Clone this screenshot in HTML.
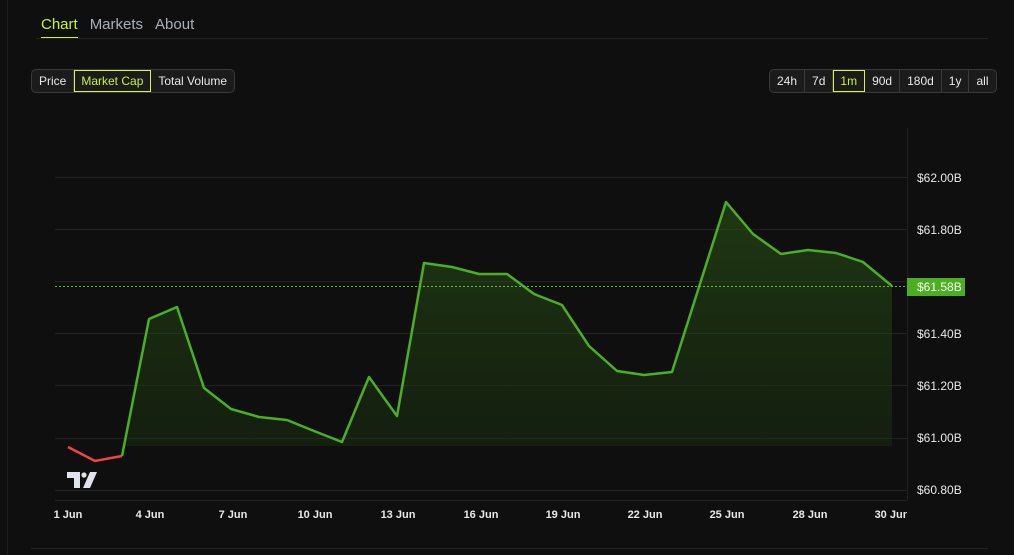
<!DOCTYPE html>
<html><head><style>
body{margin:0;background:#0f0f0f;font-family:"Liberation Sans",sans-serif;width:1014px;height:555px;overflow:hidden;position:relative}
.vl{position:absolute;left:7px;top:0;width:1px;height:555px;background:#1e1e1e}
.tabs{position:absolute;left:41px;top:16px;font-size:15px;color:#aab0b8}
.tabs span{margin-right:12px;display:inline-block}
.tabs .a{color:#c6f432;border-bottom:2px solid #c6f432;padding-bottom:4px}
.tl{position:absolute;left:36px;top:38px;width:952px;height:1px;background:#222}
.grp{position:absolute;top:69px;display:flex;border:1px solid #3a3a3a;border-radius:5px;background:#1b1b1b;height:22px;font-size:12px;color:#e8e8e8}
.grp div{padding:0 7px;line-height:22px;border-right:1px solid #3a3a3a}
.grp div:last-child{border-right:none}
.grp .s{outline:1px solid #d6f53a;outline-offset:-1px;color:#c6f432}
</style></head><body>
<div class="vl"></div>
<div class="tabs"><span class="a">Chart</span><span>Markets</span><span>About</span></div>
<div class="tl"></div>
<div class="grp" style="left:31px"><div>Price</div><div class="s">Market Cap</div><div>Total Volume</div></div>
<div class="grp" style="left:769px"><div>24h</div><div>7d</div><div class="s">1m</div><div>90d</div><div>180d</div><div>1y</div><div>all</div></div>
<svg width="1014" height="555" style="position:absolute;left:0;top:0">
<defs><linearGradient id="g" x1="0" y1="0" x2="0" y2="1"><stop offset="0" stop-color="#2c5a16" stop-opacity=".55"/><stop offset="1" stop-color="#1d3a10" stop-opacity=".35"/></linearGradient>
<clipPath id="c"><rect x="54" y="500" width="853" height="30"/></clipPath></defs>
<g stroke="#222" stroke-width="1">
<line x1="55" y1="177.5" x2="907" y2="177.5"/><line x1="55" y1="229.5" x2="907" y2="229.5"/><line x1="55" y1="281.5" x2="907" y2="281.5"/><line x1="55" y1="333.5" x2="907" y2="333.5"/><line x1="55" y1="385.5" x2="907" y2="385.5"/><line x1="55" y1="438.5" x2="907" y2="438.5"/><line x1="55" y1="490.5" x2="907" y2="490.5"/>
<line x1="55" y1="500.5" x2="907" y2="500.5"/><line x1="907.5" y1="128" x2="907.5" y2="500"/><line x1="31" y1="548.5" x2="988" y2="548.5"/>
</g>
<polygon fill="url(#g)" points="122,456 149,319 177,307 204,388 231,409 259,417 287,420 314,431 342,442 369,377 397,416 424,263 452,267 479,274 507,274 534,294 562,305 589,346 617,371 644,375 672,372 726,202 753,234 781,254 808,250 836,253 863,262 892,286 892,446 122,446"/>
<polyline fill="none" stroke="#ef4444" stroke-width="2.5" points="68,447 95,461 122,456"/>
<polyline fill="none" stroke="#4caf1f" stroke-width="2.5" stroke-linejoin="round" points="122,456 149,319 177,307 204,388 231,409 259,417 287,420 314,431 342,442 369,377 397,416 424,263 452,267 479,274 507,274 534,294 562,305 589,346 617,371 644,375 672,372 726,202 753,234 781,254 808,250 836,253 863,262 892,286"/>
<line x1="55" y1="286.5" x2="907" y2="286.5" stroke="#5ec02a" stroke-width="1" stroke-dasharray="2,2"/>
<rect x="907" y="278" width="58" height="18" fill="#4caf1f"/>
<g font-family="Liberation Sans" font-size="12" fill="#e8e8e8">
<text x="917" y="182">$62.00B</text><text x="917" y="234">$61.80B</text><text x="917" y="338">$61.40B</text><text x="917" y="390">$61.20B</text><text x="917" y="442">$61.00B</text><text x="917" y="494">$60.80B</text>
<text x="917" y="291" fill="#fff">$61.58B</text>
<g text-anchor="middle" font-weight="bold" font-size="11" clip-path="url(#c)"><text x="68" y="518">1 Jun</text><text x="150" y="518">4 Jun</text><text x="233" y="518">7 Jun</text><text x="315" y="518">10 Jun</text><text x="398" y="518">13 Jun</text><text x="481" y="518">16 Jun</text><text x="563" y="518">19 Jun</text><text x="645" y="518">22 Jun</text><text x="727" y="518">25 Jun</text><text x="810" y="518">28 Jun</text><text x="892" y="518">30 Jun</text></g>
</g>
<g fill="#e0e3eb"><path d="M67 472h13v16h-6v-10h-7z"/><circle cx="84" cy="475" r="2.6"/><path d="M90 472h7l-7 16h-7z"/></g>
</svg>
</body></html>
